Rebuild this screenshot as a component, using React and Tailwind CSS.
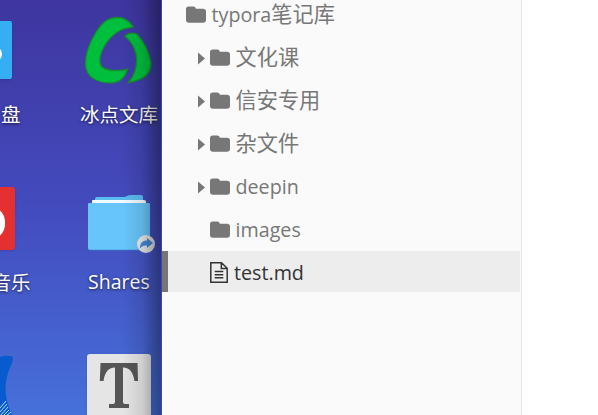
const latin = "font-['Open_Sans','Noto_Sans_CJK_SC',sans-serif]";

function FolderIcon() {
  return (
    <svg className="mt-px h-[17px] w-5 shrink-0" viewBox="0 0 20 17" fill="currentColor">
      <path d="M0 3C0 1.4 1 .4 2.6 .4H7.2C8.8 .4 9.8 1.4 9.8 2.8H17C18.8 2.8 20 3.9 20 5.5V14C20 15.700 18.8 16.700 17 16.700H2.8C1.2 16.700 0 15.700 0 14Z" />
    </svg>
  );
}

function FileIcon() {
  return (
    <svg className="mt-0.5 h-[21px] w-[18px] shrink-0" viewBox="0 0 18 21" fill="none" stroke="currentColor" strokeWidth="1.5">
      <path d="M.8 .8H11.5L17.2 6.3V20.2H.8ZM11.3 .8V6.5H17.2M4.7 9.6H13.3M4.7 12.7H13.3M4.7 15.8H13.3" />
    </svg>
  );
}

function TreeRow({ cjk, name, arrow, root, file }) {
  return (
    <div
      className={
        "flex h-[41px] shrink-0 items-center whitespace-pre " +
        (file ? "border-l-[6px] border-[#757575] bg-[#ededed] pl-[42px] text-[#333]" : root ? "pl-6 text-[#777]" : "pl-9 text-[#777]")
      }
    >
      {!root && !file && (
        <span className="w-3 shrink-0">
          {arrow && (
            <svg className="mt-[3px] h-[13px] w-[7px]" viewBox="0 0 7 12" fill="currentColor">
              <path d="M0 0L7 6L0 12Z" />
            </svg>
          )}
        </span>
      )}
      {file ? <FileIcon /> : <FolderIcon />}
      <span className={"flex h-[30px] items-baseline leading-[30px] " + (file ? "mt-0.5 ml-1.5" : name && !root ? "mt-0.5 ml-[5.5px]" : "-mt-0.5 ml-[5.5px]")}>
        {name && <span className={latin + " text-[19.7px]"}>{name}</span>}
        {cjk && <span className="font-['Noto_Sans_CJK_SC',sans-serif] text-[21.2px] font-normal">{cjk}</span>}
      </span>
    </div>
  );
}

const label = "absolute whitespace-nowrap text-[19.5px] leading-7 text-white [text-shadow:0_1px_3px_rgba(0,0,0,.65)]";

function Desktop() {
  return (
    <div className="relative h-full w-[162px] shrink-0 overflow-hidden bg-linear-to-b from-[#3e359f] via-[#434bbd] via-50% to-[#4670da]">
      <div className="absolute top-[21px] -left-12 h-[58px] w-[60px] overflow-hidden rounded-xs bg-[#36aef4] shadow-sm">
        <div className="absolute top-[25px] left-[34px] h-4 w-4 rounded-full bg-white" />
      </div>
      <svg className="absolute top-[16px] left-[84px] h-[70px] w-[70px]" viewBox="0 0 70 70" fill="#00bf3d" stroke="#178d2b" strokeWidth="1.3">
        <path d="M49.500 11C45 4 39 1.200 32 1.500C23 2 16 9 11 18C5 28 1.500 37 1.500 48C2 60 11 66.500 26 67C34 67 40 64 43.500 53.500C36 55 29 54.500 25 54C18 53 15 49 16 42C18 31 26 20 36 14.500C40 12 46 12 49.500 11Z" />
        <path d="M41 20C44 17 48 16.500 53 18C60 26 65 35 67 46C68 57 61 64 44.500 66.500C50 60 52.500 53 52.700 44C52.500 35 49 27 41 20Z" />
      </svg>
      <span className={label + " top-[100px] left-[1px] font-['Noto_Sans_CJK_SC',sans-serif]"}>盘</span>
      <span className={label + " top-[100px] left-[80px] font-['Noto_Sans_CJK_SC',sans-serif]"}>冰点文库</span>

      <div className="absolute top-[187px] -left-12 h-[63px] w-[63px] overflow-hidden rounded-[3px] bg-[#e43030] shadow-sm">
        <div className="absolute top-[19px] left-[21px] h-[34px] w-8 rounded-full bg-white" />
      </div>
      <svg className="absolute top-[193px] left-[87px] h-[62px] w-[70px]" viewBox="0 0 70 62">
        <path d="M8 9V5.500Q8 4 10 4H38L41 2.500Q42 2 44 2H54Q56 2 56 4V9Z" fill="#5bbcf0" />
        <path d="M5 8Q5 7 6 7H57Q59 7 59 8.500V12H5Z" fill="#f2fbff" />
        <path d="M1 11Q1 10 2 10H62Q63 10 63 11V55Q63 57 61 57H3Q1 57 1 55Z" fill="#68c5fb" />
        <path d="M2 57H62" stroke="#348bc8" opacity=".6" />
        <circle cx="59" cy="51" r="9" fill="#e8e8e8" />
        <path d="M60 45L66 50L60 55V52.500C57 52 55 53 53 55.500C53 50 55.500 47.500 60 47.500Z" fill="#438bdc" />
      </svg>
      <span className={label + " top-[268px] -left-[8.500px] font-['Noto_Sans_CJK_SC',sans-serif]"}>音乐</span>
      <span className={label + " top-[268px] left-[88px] font-['Open_Sans',sans-serif]"}>Shares</span>

      <svg className="absolute top-[355px] left-0 h-[60px] w-4" viewBox="0 0 16 60">
        <path d="M0 2Q7 0 12 1.500Q14 3 12 8C6 20 4 33 7 46Q9 54 12 60H0Z" fill="#075bcf" />
        <path d="M0 53L6 46M0 57L7 49M0 61L8 52M3 61L9 55M6 61L11 57" stroke="#b6daf6" strokeWidth="1" />
      </svg>
      <div className="absolute top-[354px] left-[87px] flex h-[66px] w-16 justify-center rounded-[3px] bg-[#e5e5e5] shadow-sm">
        <svg className="mt-[9px] h-[46px] w-10" viewBox="0 0 40 46" fill="#565656">
          <path d="M1.500 0H38.500L39 18H35.500C34 9 31 5 24 4.500V39Q24 41 26 41H30V45H10V41H14Q16 41 16 39V4.500C9 5 6 9 4.500 18H.8Z" />
        </svg>
      </div>
      <div className="absolute inset-y-0 right-0 w-10 bg-linear-to-r from-transparent via-black/10 to-black/40" />
      <div className="absolute inset-y-0 right-0 w-px bg-[#4144b5]" />
    </div>
  );
}

export default function App() {
  return (
    <div className="flex h-[415px] w-[598px] overflow-hidden bg-white">
      <Desktop />
      <aside className="flex w-[360px] shrink-0 flex-col border-r border-[#e5e5e5] bg-[#fafafa] pr-px">
        <div className="-mt-[7px] flex flex-col gap-0.5">
          <TreeRow root name="typora" cjk="笔记库" />
          <TreeRow arrow cjk="文化课" />
          <TreeRow arrow cjk="信安专用" />
          <TreeRow arrow cjk="杂文件" />
          <TreeRow arrow name="deepin" />
          <TreeRow name="images" />
          <TreeRow file name="test.md" />
        </div>
      </aside>
      <main className="flex-1 bg-white" />
    </div>
  );
}
